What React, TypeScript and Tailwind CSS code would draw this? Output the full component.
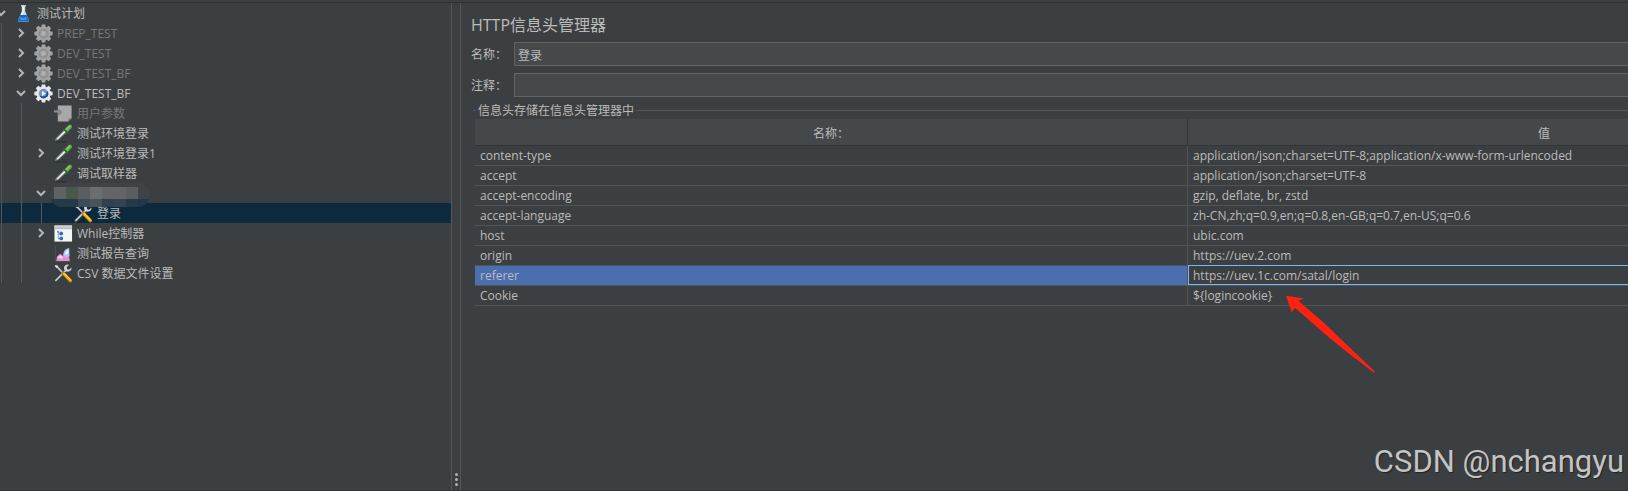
import { ReactNode } from "react";

import clsx from "clsx";

type Icon_name = "flask" | "gear" | "gear-off" | "params" | "dropper" | "tools" | "loop" | "report" | "hidden";

type Props_node = {
    id: number,
    title: string,
    icon: Icon_name,
    depth: number,
    arrow?: "open" | "closed",
    disabled?: boolean,
    selected?: boolean
}

const nodes: Props_node[] = [
    { id: 1, title: "测试计划", icon: "flask", depth: 0, arrow: "open" },
    { id: 2, title: "PREP_TEST", icon: "gear-off", depth: 1, arrow: "closed", disabled: true },
    { id: 3, title: "DEV_TEST", icon: "gear-off", depth: 1, arrow: "closed", disabled: true },
    { id: 4, title: "DEV_TEST_BF", icon: "gear-off", depth: 1, arrow: "closed", disabled: true },
    { id: 5, title: "DEV_TEST_BF", icon: "gear", depth: 1, arrow: "open" },
    { id: 6, title: "用户参数", icon: "params", depth: 2, disabled: true },
    { id: 7, title: "测试环境登录", icon: "dropper", depth: 2 },
    { id: 8, title: "测试环境登录1", icon: "dropper", depth: 2, arrow: "closed" },
    { id: 9, title: "调试取样器", icon: "dropper", depth: 2 },
    { id: 10, title: "", icon: "hidden", depth: 2, arrow: "open" },
    { id: 11, title: "登录", icon: "tools", depth: 3, selected: true },
    { id: 12, title: "While控制器", icon: "loop", depth: 2, arrow: "closed" },
    { id: 13, title: "测试报告查询", icon: "report", depth: 2 },
    { id: 14, title: "CSV 数据文件设置", icon: "tools", depth: 2 },
];

const headers = [
    { name: "content-type", value: "application/json;charset=UTF-8;application/x-www-form-urlencoded" },
    { name: "accept", value: "application/json;charset=UTF-8" },
    { name: "accept-encoding", value: "gzip, deflate, br, zstd" },
    { name: "accept-language", value: "zh-CN,zh;q=0.9,en;q=0.8,en-GB;q=0.7,en-US;q=0.6" },
    { name: "host", value: "ubic.com" },
    { name: "origin", value: "https://uev.2.com" },
    { name: "referer", value: "https://uev.1c.com/satal/login", selected: true },
    { name: "Cookie", value: "${logincookie}" },
];

const teeth = [0, 45, 90, 135, 180, 225, 270, 315];

function Gear({ off }: { off?: boolean }) {
    const body = off ? "#a3a3a3" : "#e6e9ec";
    return (
        <>
            {teeth.map((angle) => (
                <path key={angle} d="M7.6 3.6 8.2.4h3.6l.6 3.2z" fill={body} transform={`rotate(${angle} 10 10)`} />
            ))}
            <circle cx="10" cy="10" r="7.400" fill={body} />
            <circle cx="10" cy="10" r="5" fill={off ? "#8b8b8b" : "#7f93b8"} />
            <path d="M14.500 7.800a5 5 0 0 1-8.500 5.200z" fill={off ? "#909090" : "#1f4795"} />
            <circle cx="9.800" cy="9.800" r="3.400" fill={off ? "#a0a0a0" : "#6f93cf"} />
            <path d="M8.400 7.400 12.600 10l-4.200 2.600z" fill={off ? "#b2b2b2" : "#f4f8ff"} />
        </>
    );
}

const icons: Record<Exclude<Icon_name, "hidden">, ReactNode> = {
    flask: (
        <>
            <path d="M8.2 2h3.6v5.6l4 9.4q.5 1.8-1.3 1.8h-9q-1.8 0-1.3-1.8l4-9.4z" fill="#c9d9e6" />
            <path d="M9.2 3h1v5l-3 7-1.2-.6L9.2 8z" fill="#ffffff" />
            <path d="M6.600 11.600h6.800l2.200 5.400q.4 1.400-1 1.400H5.400q-1.400 0-1-1.400z" fill="#1664c4" />
            <path d="M6.800 13.500q3 2 6 0l1 2.500q-3.800 2-7.800 0z" fill="#3d94ec" />
            <path d="M7.500 1.200h5v1.400h-5z" fill="#e6edf2" />
        </>
    ),
    gear: <Gear />,
    "gear-off": <Gear off />,
    params: (
        <>
            <path d="M4 1.500h14.500V15L15 18.500H4z" fill="#a8a8a8" />
            <path d="m15 18.500.4-3.300 3.100-.2z" fill="#777777" />
            <path d="M0 6.500h4c4-1 5 4 0 4.500H4V9H0z" fill="#8c8c8c" />
            <path d="M4 6q3.500 0 3.500 2.700T4 11.500" fill="none" stroke="#787878" />
        </>
    ),
    dropper: (
        <>
            <path d="M2 18.800h11" stroke="#2c2f30" strokeWidth="1.200" />
            <path d="m1 18 1-3.200 8.300-8.600 2.800 2.700-8.600 8z" fill="#7f898b" />
            <path d="m3 15.600 8-8.200 1 1-8.200 8z" fill="#ffffff" />
            <path d="m9.200 5.600 4.800 4.800 1.300-1.100-4.900-4.900z" fill="#2f6d2a" />
            <path d="M11.200 5.200 15.400 1q1.800-1 3 .3t.1 3l-4.100 4.200z" fill="#5fa846" />
            <path d="m12.600 5.400 3.600-3.500q1-.4 1.300.3l-4 4.100z" fill="#9bd47c" />
        </>
    ),
    tools: (
        <>
            <path d="m2.400 2 7.800 8.400" stroke="#bfc3c5" strokeWidth="1.800" />
            <path d="m.8 1 2.900.6.9 2.200-1.300.8L1.200 3z" fill="#d8dadb" />
            <path d="M1.600 18 13 6.600" stroke="#3a3d3e" strokeWidth="3.600" strokeLinecap="round" />
            <path d="M2 17.200 13 6.200" stroke="#c8cccd" strokeWidth="1.800" strokeLinecap="round" />
            <path d="M18.600 3.600 15.800 6l-2-.6-.4-2.200L16 .8q-3.600-.7-5 1.500-.9 1.900 0 3.900 1.600 2.300 4.500 1.800 2.900-.9 3.100-4.400z" fill="#d3d6d7" />
            <path d="m10.200 10.300 7 7.300" stroke="#a06f00" strokeWidth="3.800" strokeLinecap="round" />
            <path d="m10.300 10.100 7 7.200" stroke="#f6b81d" strokeWidth="2.600" strokeLinecap="round" />
            <path d="m10.800 9.700 6 6.200" stroke="#ffe07a" strokeWidth=".8" />
        </>
    ),
    loop: (
        <>
            <path d="M.5 1.500h18.500v17H.5z" fill="#f4f6f8" />
            <path d="M.5 1.500h18.500v4H.5z" fill="#b9bdc1" />
            <path d="M.5 2.500h18.500v1H.5z" fill="#dcdfe1" />
            <path d="M4.500 8v8M4.500 10.500h3M4.500 15.500h3" stroke="#6b7f9c" fill="none" strokeDasharray="1.500 .5" />
            <circle cx="7.600" cy="10" r="2" fill="#2c6fc9" />
            <circle cx="7.600" cy="15.200" r="2" fill="#2c6fc9" />
            <circle cx="4.300" cy="8.200" r="1.200" fill="#5c8fd8" />
        </>
    ),
    report: (
        <>
            <path d="M1.500 2v16.500H18" stroke="#55585b" fill="none" strokeDasharray="2 1" />
            <path d="m2.500 18 .5-4.500 3.500-3.200 3 2.200 2-1.500 4.500 2.500.5 4.500z" fill="#f08ad0" />
            <path d="m3.500 14.500 3-2.800 3 2.300-1 1.500z" fill="#fbd3ef" />
            <path d="M9.500 12q.5-6 5-7.200l1.500-.6.3 8.800q-2.500 1.800-6.800-1z" fill="#a9cdf4" />
            <path d="M11.500 11q.5-4 3.500-5v4z" fill="#e9f4ff" />
        </>
    ),
};

const mosaic = [
    "bg-[#606365]", "bg-[#4a5849]", "bg-[#5b5e60]", "bg-[#6b6d70]", "bg-[#636567]", "bg-[#626466]", "bg-[#5b5e60]",
    "bg-[#253a49]", "bg-[#253a49]", "bg-[#3d4c57]", "bg-[#4a5359]", "bg-[#30414d]", "bg-[#33444f]", "bg-[#253a49]",
];

function HiddenLabel() {
    return (
        <span className="relative z-10 -ml-1 h-6 w-25 shrink-0 self-start overflow-hidden rounded-xl bg-linear-to-b from-[#404345] from-65% to-[#20364a] to-65% pt-1 pl-1">
            <span className="grid w-[84px] grid-cols-7">
                {mosaic.map((color, index) => <span key={index} className={clsx("h-3", color)} />)}
            </span>
        </span>
    );
}

function Chevron({ open }: { open: boolean }) {
    return (
        <svg viewBox="0 0 12 12" className="size-3" fill="none" stroke="#b4b6b8" strokeWidth="2">
            <path d={open ? "m2 4 4 4 4-4" : "m4 2 4 4-4 4"} />
        </svg>
    );
}

// One tree row: guide lines on the left, then arrow, icon and title
function TreeNode({ node }: { node: Props_node }) {
    return (
        <li
            role="treeitem"
            aria-level={node.depth + 1}
            aria-selected={!!node.selected}
            aria-expanded={node.arrow ? node.arrow === "open" : undefined}
            className={clsx("flex h-5 items-center whitespace-pre", node.selected && "bg-[#0d293e]", node.disabled ? "text-[#777777]" : "text-[#bbbbbb]")}
        >
            {Array.from({ length: node.depth }, (_, index) => (
                <span key={index} className="h-5 w-5 shrink-0 pl-px">
                    <span className="block h-5 w-px bg-[#55585a]" />
                </span>
            ))}
            <span className="flex w-3.5 shrink-0 justify-start">
                {node.arrow && (
                    <button type="button" aria-label={node.arrow === "open" ? "收起" : "展开"} className="-ml-[5px] cursor-pointer">
                        <Chevron open={node.arrow === "open"} />
                    </button>
                )}
            </span>
            {node.icon === "hidden" ? <HiddenLabel /> : (
                <svg viewBox="0 0 20 20" className="mr-1 size-[19px] shrink-0">{icons[node.icon]}</svg>
            )}
            <span className="pt-0.5">{node.title}</span>
        </li>
    );
}

function Field({ id, label, value }: { id: string, label: string, value: string }) {
    return (
        <div className="flex items-center">
            <label htmlFor={id} className="w-[43px] shrink-0 pt-0.5">{label}</label>
            <input id={id} defaultValue={value} className="h-6 min-w-0 grow border border-r-0 border-[#646464] bg-[#45494a] px-[3px] pt-0.5 outline-none" />
        </div>
    );
}

function HeaderTable() {
    return (
        <table className="w-[1425px] table-fixed border-collapse text-left">
            <thead>
                <tr className="h-[26px] border-b border-[#323435] bg-[#45484a]">
                    <th className="border-r border-[#323435] pt-1 text-center font-normal">名称：</th>
                    <th className="pt-1 text-center font-normal">值</th>
                </tr>
            </thead>
            <tbody>
                {headers.map((header) => (
                    <tr key={header.name} className="h-5 border-b border-[#525557]">
                        <td className={clsx("border-r border-[#525557] px-[5px] pt-0.5", header.selected && "bg-[#4b6eaf]")}>{header.name}</td>
                        <td className={clsx("px-[5px] pt-0.5", header.selected && "outline -outline-offset-1 outline-[#78b9f8]")}>{header.value}</td>
                    </tr>
                ))}
            </tbody>
        </table>
    );
}

export default function App() {
    return (
        <div className="relative flex h-screen flex-col overflow-hidden border-b border-[#333638] bg-[#3c3f41] pt-0.5 font-['Open_Sans','Noto_Sans_CJK_SC',sans-serif] text-xs text-[#bbbbbb]">
            <main className="flex min-h-0 grow border-t border-[#2f3133]">
                <ul role="tree" aria-label="测试计划" className="w-[451px] shrink-0">
                    {nodes.map((node) => <TreeNode key={node.id} node={node} />)}
                </ul>
                <div role="separator" className="flex w-2.5 shrink-0 flex-col items-center justify-end gap-0.5 border-x border-[#555859] pb-1">
                    <span className="size-[3px] rounded-full bg-[#b0b2b3]" />
                    <span className="size-[3px] rounded-full bg-[#b0b2b3]" />
                    <span className="size-[3px] rounded-full bg-[#b0b2b3]" />
                </div>
                <section className="min-w-0 grow pt-2.5 pl-2.5">
                    <h1 className="mb-[5px] text-base leading-6">HTTP信息头管理器</h1>
                    <form className="flex flex-col gap-[7px]">
                        <Field id="name" label="名称：" value="登录" />
                        <Field id="comment" label="注释：" value="" />
                    </form>
                    <fieldset className="mt-1 ml-0.5 min-w-0 border-t border-[#555859]">
                        <legend className="ml-[3px] px-0.5 pt-0.5 leading-4">信息头存储在信息头管理器中</legend>
                        <div className="overflow-hidden pl-0.5">
                            <HeaderTable />
                        </div>
                    </fieldset>
                </section>
            </main>
            <svg viewBox="0 0 90 78" className="pointer-events-none absolute top-[295px] left-[1286px] h-[78px] w-[90px]">
                <path d="M0 .7 17.700 3.300 12.500 6 37 27 89 76.700 88.300 78 66 61 40 40 10.800 14.200 9.200 13 5.700 17.300z" fill="#ff2112" />
            </svg>
            <p className="absolute right-1 bottom-2 font-['Roboto',sans-serif] text-[31px] leading-10 text-[#c3c4c5] [text-shadow:1px_1px_1px_#222]">CSDN @nchangyu</p>
        </div>
    );
}
